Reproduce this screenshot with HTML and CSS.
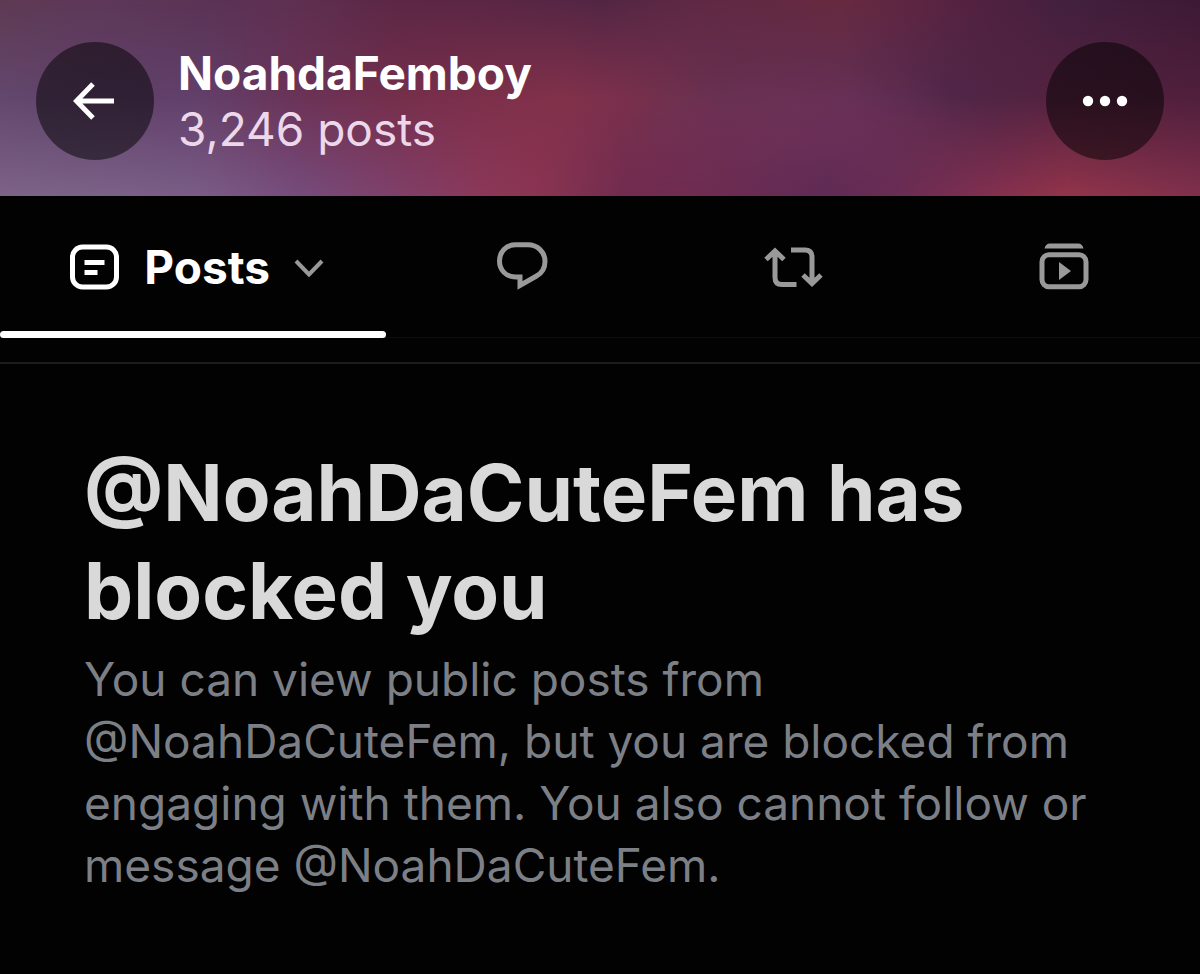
FILE: index.html
```html
<!DOCTYPE html>
<html lang="en">
<head>
<meta charset="utf-8">
<meta name="viewport" content="width=device-width, initial-scale=1">
<title>NoahdaFemboy</title>
<link rel="stylesheet" href="styles.css">
</head>
<body>
<header class="banner">
  <button class="round-button" type="button" aria-label="Back">
    <svg width="44" height="38" viewBox="0 0 44 38" fill="none" stroke="currentColor" stroke-width="5"><path d="M20 2 3.500 19 20 36M4 19h37"/></svg>
  </button>
  <div class="profile">
    <div class="profile-name">NoahdaFemboy</div>
    <div class="profile-count">3,246 posts</div>
  </div>
  <button class="round-button" type="button" aria-label="More">
    <svg width="46" height="12" viewBox="0 0 46 12" fill="currentColor"><circle cx="6" cy="6" r="5.200"/><circle cx="23" cy="6" r="5.200"/><circle cx="40" cy="6" r="5.200"/></svg>
  </button>
</header>
<nav class="tabs">
  <button class="tab tab-active" type="button">
    <svg width="50" height="46" viewBox="0 0 50 46" fill="none" stroke="currentColor" stroke-width="5"><rect x="2.500" y="3" width="44" height="40" rx="10"/><path d="M14.500 18.500h20M14.500 28.500h13"/></svg>
    <span class="tab-label">Posts</span>
    <svg class="chevron" width="30" height="20" viewBox="0 0 30 20" fill="none" stroke="currentColor" stroke-width="4"><path d="M2 4l13 13.500L28 4"/></svg>
  </button>
  <button class="tab" type="button" aria-label="Replies">
    <svg width="52" height="50" viewBox="0 0 52 50" fill="none" stroke="currentColor" stroke-width="5"><path d="M19.500 2.800h12.500C41.500 2.800 49 10 49 19.500c0 6-3 11.500-8.500 14.500L24 43.500v-8.500h-4.500C10 35 3.500 28 3.500 19S10 2.800 19.500 2.800z"/></svg>
  </button>
  <button class="tab" type="button" aria-label="Reposts">
    <svg width="60" height="44" viewBox="0 0 60 44" fill="none" stroke="currentColor" stroke-width="5"><path d="M3 14.500 12 6l9 8.500M12 7v25.500c0 4.500 2.500 7 7 7h14.500M28 5h14c4.500 0 7 2.500 7 7v26M40 30l9 8.500 9-8.500"/></svg>
  </button>
  <button class="tab" type="button" aria-label="Videos">
    <svg width="52" height="50" viewBox="0 0 52 50" fill="none" stroke="currentColor" stroke-width="5"><path stroke="none" fill="currentColor" d="M6.500 6.500C7 3.500 9 1.500 12 1.500h28c3 0 5 2 5.500 5z"/><rect x="4" y="12.800" width="44" height="32" rx="7"/><path stroke="none" fill="currentColor" d="M21 20v18l12-9z"/></svg>
  </button>
</nav>
<main class="notice">
  <h1 class="notice-title">@NoahDaCuteFem has blocked you</h1>
  <p class="notice-text">You can view public posts from @NoahDaCuteFem, but you are blocked from engaging with them. You also cannot follow or message @NoahDaCuteFem.</p>
</main>
</body>
</html>
```
FILE: styles.css
```css
* { box-sizing: border-box; }

body {
  margin: 0;
  min-height: 100vh;
  background: #020202;
  color: #fff;
  font-family: Inter, "Liberation Sans", sans-serif;
}

button {
  border: 0;
  padding: 0;
  font: inherit;
  color: inherit;
  background: none;
  cursor: pointer;
}

svg { display: block; flex: none; }

/* The cover is three colour rows, faded into each other from top to bottom. */
.banner {
  position: relative;
  isolation: isolate;
  display: flex;
  align-items: center;
  gap: 24px;
  padding: 42px 36px 36px;
  background: linear-gradient(90deg, #7d6486, #7c6288 8%, #7a5c86 17%, #764c7c 25%, #7f406a 33%, #8c3859 40%, #8a3452 45%, #722c50 52%, #702c52 58%, #602b56 69%, #6b2d54 75%, #84304f 83%, #93344b 89%, #80304c);
}

.banner::before,
.banner::after {
  content: "";
  position: absolute;
  inset: 0;
  z-index: -1;
}

.banner::before {
  background:
    radial-gradient(ellipse 16% 45% at 67% 74%, #77335acc, transparent),
    linear-gradient(95deg, #64486e, #60426a 8%, #62406a 17%, #6b3358 25%, #752f4c 33%, #7d304a 41%, #82314a 47%, #7a304c 52%, #653050 60%, #602f54 70%, #502648 79%, #54223f 88%, #501f3c);
  mask-image: linear-gradient(#000 50%, transparent);
}

.banner::after {
  background: linear-gradient(90deg, #5d3a53, #5d3858 8%, #5a3355 17%, #5e2f50 25%, #5c2745 33%, #5a2644 42%, #522644 50%, #5f2944 58%, #672a40 70%, #5f2642 75%, #4f2140 83%, #42203f 89%, #3c1a34);
  mask-image: linear-gradient(#000, transparent 50%);
}

.round-button {
  display: flex;
  flex: none;
  align-items: center;
  justify-content: center;
  width: 118px;
  height: 118px;
  border-radius: 50%;
  background: rgba(0, 0, 0, 0.5);
}

.profile { flex: 1; min-width: 0; line-height: 56px; }
.profile-name { font-size: 46px; font-weight: 700; }
.profile-count { font-size: 46px; color: #ecd8ea; }

.tabs {
  display: flex;
  height: 142px;
  border-bottom: 1px solid #0d0d0d;
}

.tab {
  display: flex;
  flex: 271;
  align-items: center;
  justify-content: center;
  color: #999;
}

.tab-active {
  position: relative;
  flex: 378;
  gap: 24px;
  padding-left: 8px;
  color: #fff;
}

.tab-active::after {
  content: "";
  position: absolute;
  inset: auto 0 -1px;
  height: 7px;
  border-radius: 4px;
  background: #fff;
}

.tab-label { font-size: 46px; font-weight: 700; }
.chevron { color: #999; }

.notice {
  margin-top: 24px;
  padding: 80px 84px;
  border-top: 2px solid #1c1c1c;
}

.notice-title {
  margin: 0;
  font-size: 78px;
  line-height: 98px;
  font-weight: 700;
  color: #d9d9d9;
}

.notice-text {
  margin: 8px 0 0;
  font-size: 46px;
  line-height: 62px;
  color: #7c8086;
}
```
